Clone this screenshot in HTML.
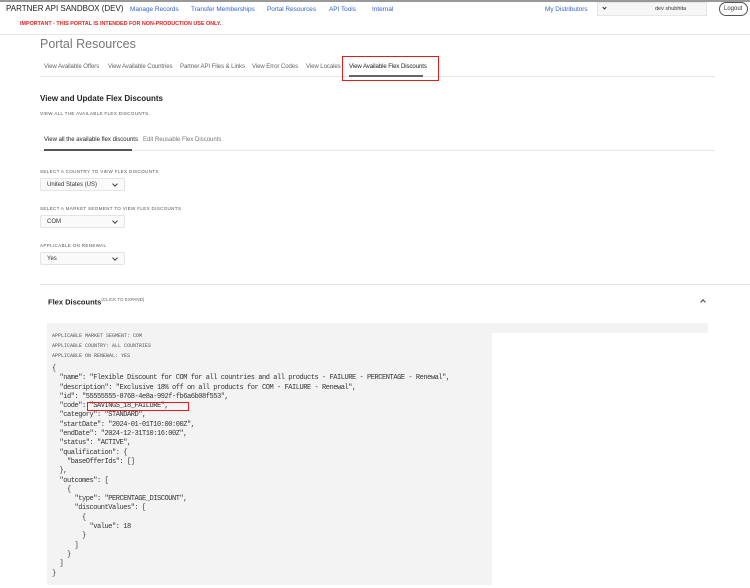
<!DOCTYPE html><html><head><style>
*{margin:0;padding:0;box-sizing:border-box}
body{width:750px;height:588px;background:#fff;font-family:"Liberation Sans",sans-serif;position:relative;overflow:hidden;color:#333}
.a{position:absolute;white-space:nowrap}
.nav{font-size:6.4px;color:#2f5fd0}
.tab{font-size:6.1px;color:#666;top:63px;letter-spacing:-.1px}
.lbl{font-size:4.6px;color:#555;letter-spacing:.3px}
.sel{position:absolute;left:40px;width:85px;height:13px;border:1px solid #e4e4e4;border-radius:2px;background:#fafafa;font-size:6px;color:#333;padding:3px 0 0 6px}
.sel:after{content:"";position:absolute;right:7px;top:3px;width:3px;height:3px;border-right:1px solid #444;border-bottom:1px solid #444;transform:rotate(45deg)}
pre.a{font-family:"Liberation Mono",monospace;font-size:7px;letter-spacing:-.45px;line-height:9.3px;color:#333;white-space:pre}
</style></head><body>
<div class="a" style="left:0;top:0;width:750px;height:2px;background:#999"></div>
<div class="a" style="left:6px;top:4px;font-size:8px;color:#222">PARTNER API SANDBOX (DEV)</div>
<div class="a nav" style="left:130px;top:6px">Manage Records</div>
<div class="a nav" style="left:191px;top:6px">Transfer Memberships</div>
<div class="a nav" style="left:267px;top:6px">Portal Resources</div>
<div class="a nav" style="left:329px;top:6px">API Tools</div>
<div class="a nav" style="left:372px;top:6px">Internal</div>
<div class="a nav" style="left:545px;top:6px">My Distributors</div>
<div class="a" style="left:597px;top:2px;width:110px;height:14px;background:#f6f6f6;border:1px solid #e6e6e6;font-size:5.5px;color:#333;padding:3px 0 0 57px">dev shubhita</div>
<div class="a" style="left:603px;top:6px;width:3px;height:3px;border-right:1px solid #333;border-bottom:1px solid #333;transform:rotate(45deg)"></div>
<div class="a" style="left:719px;top:2px;width:29px;height:14px;border:1px solid #555;border-radius:7px;font-size:6px;color:#333;padding:3px 0 0 4px">Logout</div>
<div class="a" style="left:20px;top:21px;font-size:5.4px;color:#e02020;font-weight:bold">IMPORTANT - THIS PORTAL IS INTENDED FOR NON-PRODUCTION USE ONLY.</div>
<div class="a" style="left:0;top:34px;width:750px;height:1px;background:#e6e6e6"></div>
<div class="a" style="left:40px;top:37px;font-size:12.5px;color:#777">Portal Resources</div>
<div class="a tab" style="left:44px">View Available Offers</div>
<div class="a tab" style="left:108px">View Available Countries</div>
<div class="a tab" style="left:180px">Partner API Files &amp; Links</div>
<div class="a tab" style="left:252px">View Error Codes</div>
<div class="a tab" style="left:306px">View Locales</div>
<div class="a tab" style="left:349px;color:#222">View Available Flex Discounts</div>
<div class="a" style="left:40px;top:76px;width:675px;height:1px;background:#e6e6e6"></div>
<div class="a" style="left:349px;top:75px;width:74px;height:2px;background:#666"></div>
<div class="a" style="left:342px;top:56px;width:97px;height:25px;border:1px solid #e21b1b"></div>
<div class="a" style="left:40px;top:94px;font-size:8px;font-weight:bold;color:#222">View and Update Flex Discounts</div>
<div class="a lbl" style="left:40px;top:111px">VIEW ALL THE AVAILABLE FLEX DISCOUNTS.</div>
<div class="a" style="left:44px;top:137px;font-size:6px;color:#222">View all the available flex discounts</div>
<div class="a" style="left:143px;top:137px;font-size:6px;color:#777">Edit Reusable Flex Discounts</div>
<div class="a" style="left:40px;top:150px;width:675px;height:1px;background:#e6e6e6"></div>
<div class="a" style="left:44px;top:149px;width:88px;height:2px;background:#555"></div>
<div class="a lbl" style="left:40px;top:169px">SELECT A COUNTRY TO VIEW FLEX DISCOUNTS</div>
<div class="sel" style="top:178px">United States (US)</div>
<div class="a lbl" style="left:40px;top:206px">SELECT A MARKET SEGMENT TO VIEW FLEX DISCOUNTS</div>
<div class="sel" style="top:215px">COM</div>
<div class="a lbl" style="left:40px;top:243px">APPLICABLE ON RENEWAL</div>
<div class="sel" style="top:252px">Yes</div>
<div class="a" style="left:40px;top:284px;width:710px;height:1px;background:#e2e2e2"></div>
<div class="a" style="left:48px;top:297px;font-size:7.5px;font-weight:bold;color:#222">Flex Discounts<sup style="font-size:4.5px;font-weight:normal;color:#666">(CLICK TO EXPAND)</sup></div>
<div class="a" style="left:701px;top:300px;width:4px;height:4px;border-left:1px solid #444;border-top:1px solid #444;transform:rotate(45deg)"></div>
<div class="a" style="left:47px;top:323px;width:661px;height:10px;background:#f3f3f3"></div>
<div class="a" style="left:47px;top:323px;width:445px;height:262px;background:#f3f3f3"></div>
<div class="a" style="left:52px;top:332px;font-family:'Liberation Mono',monospace;font-size:5px;line-height:9.8px;color:#555">APPLICABLE MARKET SEGMENT: COM<br>APPLICABLE COUNTRY: ALL COUNTRIES<br>APPLICABLE ON RENEWAL: YES</div>
<pre class="a" style="left:52px;top:365px">{
  "name": "Flexible Discount for COM for all countries and all products - FAILURE - PERCENTAGE - Renewal",
  "description": "Exclusive 18% off on all products for COM - FAILURE - Renewal",
  "id": "55555555-8768-4e8a-992f-fb6a6b08f553",
  "code": "SAVINGS_18_FAILURE",
  "category": "STANDARD",
  "startDate": "2024-01-01T10:00:00Z",
  "endDate": "2024-12-31T10:16:00Z",
  "status": "ACTIVE",
  "qualification": {
    "baseOfferIds": []
  },
  "outcomes": [
    {
      "type": "PERCENTAGE_DISCOUNT",
      "discountValues": [
        {
          "value": 18
        }
      ]
    }
  ]
}</pre>
<div class="a" style="left:87px;top:402px;width:102px;height:9px;border:1px solid #e21b1b"></div>
</body></html>
